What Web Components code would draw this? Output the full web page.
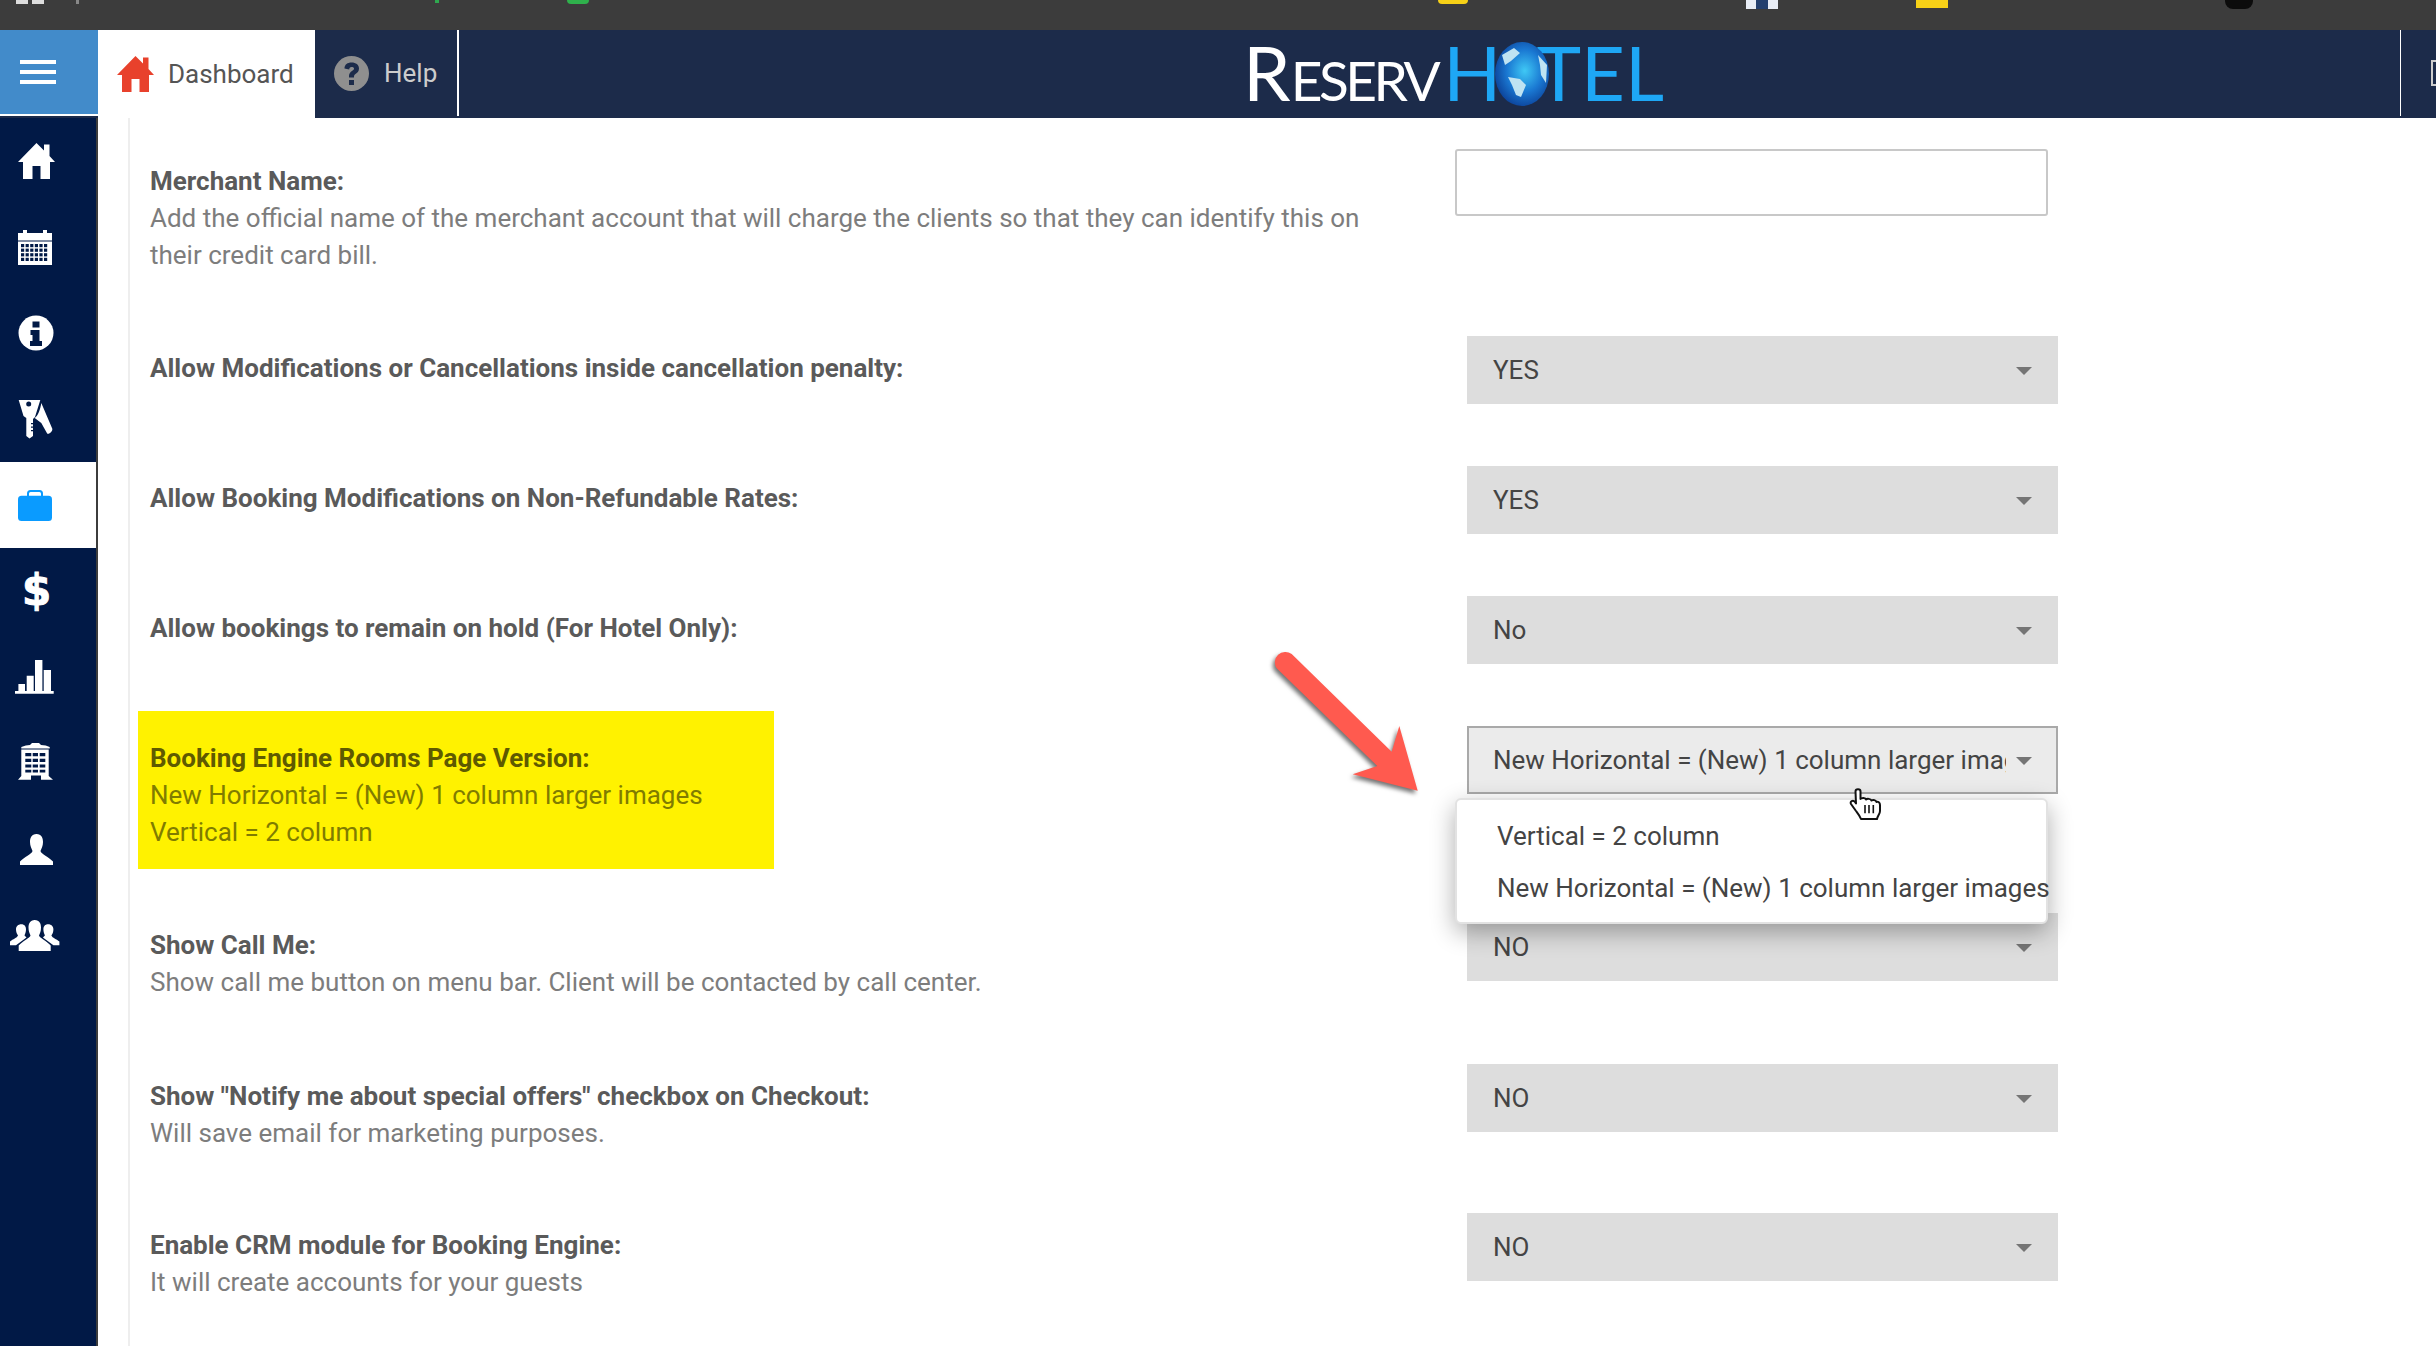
<!DOCTYPE html>
<html>
<head>
<meta charset="utf-8">
<title>ReservHotel settings</title>
<style>
  html, body { margin: 0; height: 100%; overflow: hidden; background: #fff; }
  body { font-family: Roboto, "Liberation Sans", sans-serif; display: flex; flex-direction: column; width: 2436px; height: 1346px; }
</style>
</head>
<body>
<chrome-strip></chrome-strip>
<app-header></app-header>
<main-area>
  <side-nav>
    <nav-item><svg viewBox="0 0 37 36" width="37" height="36" fill="currentColor"><path d="M18.5 0L26 7.500V1.500h5.500V13L37 19H32V36H22.500V23H14.500V36H5V19H0Z"/></svg></nav-item>
    <nav-item><cal-icon></cal-icon></nav-item>
    <nav-item><svg viewBox="0 0 36 36" width="36" height="36"><circle cx="18" cy="18" r="17.500" fill="currentColor"/><path fill="#011946" d="M14.500 6.500h7v6h-7zM12.500 15h9v11h2.500v5H12v-5h2.500v-6h-2z"/></svg></nav-item>
    <nav-item><svg viewBox="0 0 36 39" width="36" height="39"><path fill="currentColor" fill-rule="evenodd" d="M0.700 0H22.300L17 17 15 19V36L11.500 38.500 8.300 36V18L5.500 16ZM8.200 4a2.500 2.500 0 1 0 5 0 2.500 2.500 0 1 0-5 0Z"/><path fill="#011946" d="M13 23h2v1.200h-2zM13 26.500h2v1.200h-2zM13 30h2v1.200h-2z"/><path fill="currentColor" d="M23.300 3L34.300 28.700C34.800 31 31.500 34.500 29.300 33.700L23.300 23 16.700 18C20 16 22.500 9 23.300 3Z"/></svg></nav-item>
    <nav-item active><svg viewBox="0 0 34 31" width="34" height="31"><path fill="none" stroke="currentColor" stroke-width="2" d="M10 6V3.500Q10 1 12.500 1H21.500Q24 1 24 3.500V6"/><rect y="5.700" width="34" height="25.300" rx="3.500" fill="currentColor"/></svg></nav-item>
    <nav-item><span class="dollar">$</span></nav-item>
    <nav-item><svg viewBox="0 0 39 34" width="39" height="34" fill="currentColor" style="margin-left:-3px"><path d="M0 31h38.700v2.700H0zM3.400 24h6.600v7H3.400zM11.700 15.700h7V31h-7zM20 0h7.400v31H20zM28.700 10H36v21h-7.300z"/></svg></nav-item>
    <nav-item style="padding-bottom:3px"><svg viewBox="0 0 35 37" width="35" height="37"><path fill="currentColor" d="M3.300 4Q8 2 12 2L14 0H21L23 2Q28 2 31.700 4V5.500H3.300ZM3.300 6.500H30.700V33L35 36.700H23V32.500H13V36.700H0L3.300 33Z"/><path fill="#011946" d="M7.300 10h6v3.300h-6zM14.700 10H20v3.300h-5.300zM21.700 10h5.600v3.300h-5.600zM7.300 15.700h6V19h-6zM14.700 15.700H20V19h-5.300zM21.700 15.700h5.600V19h-5.600zM7.300 21.400h6v3h-6zM14.700 21.400H20v3h-5.300zM21.700 21.400h5.600v3h-5.600zM7.300 26.700h6v2.700h-6zM14.700 26.700H20v2.700h-5.300zM21.700 26.700h5.600v2.700h-5.600z"/></svg></nav-item>
    <nav-item><svg viewBox="0 0 33 31" width="33" height="31" fill="currentColor" style="margin-left:2px"><path d="M16.500 0C21.500 0 23 4 23 8C23 12 21.500 14.500 20.500 17C21 20 29 23 33 27.500V31H0V27.500C4 23 12 20 12.500 17C11.500 14.500 10 12 10 8C10 4 11.500 0 16.500 0Z"/></svg></nav-item>
    <nav-item><svg viewBox="0 0 50 31" width="50" height="31" fill="currentColor" style="margin-left:-8px"><path d="M24.700 0C29.700 0 31 4 31 7.500C31 11 30 13 29 15.500C29.500 18 37 21 40.700 25.500V31H8.700V25.500C12.500 21 20 18 20.500 15.500C19.500 13 18.500 11 18.500 7.500C18.500 4 20 0 24.700 0Z"/><path d="M11.300 4.300C14.500 4.300 16 6.500 16 9.500C16 12 15 14 14.500 15.500L16.500 17.500L6 25.300H0V21.500C3 19 7 18 8 15.500C7 14 6 12 6 9.500C6 6.500 8 4.300 11.300 4.300Z"/><path d="M38.100 4.300C34.900 4.300 33.400 6.500 33.400 9.500C33.400 12 34.400 14 34.900 15.500L32.900 17.500L43.400 25.300H49.400V21.500C46.400 19 42.400 18 41.400 15.500C42.400 14 43.400 12 43.400 9.500C43.400 6.500 41.400 4.300 38.100 4.300Z"/></svg></nav-item>
  </side-nav>
  <settings-panel>
    <setting-row style="--row-h:187px">
      <span slot="title">Merchant Name:</span>
      Add the official name of the merchant account that will charge the clients so that they can identify this on their credit card bill.
      <text-field slot="control"></text-field>
    </setting-row>
    <setting-row style="--row-h:130px">
      <span slot="title">Allow Modifications or Cancellations inside cancellation penalty:</span>
      <select-box slot="control">YES</select-box>
    </setting-row>
    <setting-row style="--row-h:130px">
      <span slot="title">Allow Booking Modifications on Non-Refundable Rates:</span>
      <select-box slot="control">YES</select-box>
    </setting-row>
    <setting-row style="--row-h:130px">
      <span slot="title">Allow bookings to remain on hold (For Hotel Only):</span>
      <select-box slot="control">No</select-box>
    </setting-row>
    <setting-row style="--row-h:187px" highlight>
      <span slot="title">Booking Engine Rooms Page Version:</span>
      New Horizontal = (New) 1 column larger images<br>Vertical = 2 column
      <select-box slot="control" hover>New Horizontal = (New) 1 column larger images
        <option-menu slot="menu">
          <div>Vertical = 2 column</div>
          <div>New Horizontal = (New) 1 column larger images</div>
        </option-menu>
      </select-box>
    </setting-row>
    <setting-row style="--row-h:151px">
      <span slot="title">Show Call Me:</span>
      Show call me button on menu bar. Client will be contacted by call center.
      <select-box slot="control">NO</select-box>
    </setting-row>
    <setting-row style="--row-h:149px">
      <span slot="title">Show "Notify me about special offers" checkbox on Checkout:</span>
      Will save email for marketing purposes.
      <select-box slot="control">NO</select-box>
    </setting-row>
    <setting-row style="--row-h:133px">
      <span slot="title">Enable CRM module for Booking Engine:</span>
      It will create accounts for your guests
      <select-box slot="control">NO</select-box>
    </setting-row>
    <callout-arrow></callout-arrow>
    <hand-cursor></hand-cursor>
  </settings-panel>
</main-area>

<script>
class ChromeStrip extends HTMLElement {
  constructor () {
    super()
    this.attachShadow({ mode: 'open' }).innerHTML = `
      <style>
        :host { display: flex; flex: none; height: 30px; background: #3c3c3c; overflow: hidden; align-items: flex-start; }
        i { display: block; flex: none; height: 4px; }
      </style>
      <i style="margin-left:16px;width:12px;background:#ddd"></i>
      <i style="margin-left:4px;width:12px;background:#ddd"></i>
      <i style="margin-left:32px;width:3px;background:#888"></i>
      <i style="margin-left:356px;width:4px;height:3px;background:#2fa84f"></i>
      <i style="margin-left:128px;width:22px;height:4px;border-radius:0 0 11px 11px;background:#2fb14c"></i>
      <i style="margin-left:849px;width:30px;height:4px;border-radius:0 0 10px 10px;background:#f7d117"></i>
      <i style="margin-left:278px;width:32px;height:9px;background:linear-gradient(90deg,#e8edf5 30%,#24406e 30%,#24406e 70%,#e8edf5 70%)"></i>
      <i style="margin-left:138px;width:32px;height:8px;background:#f7d117"></i>
      <i style="margin-left:277px;width:28px;height:9px;border-radius:0 0 8px 8px;background:#0c0c0c"></i>
    `
  }
}
customElements.define('chrome-strip', ChromeStrip)

class AppHeader extends HTMLElement {
  constructor () {
    super()
    this.attachShadow({ mode: 'open' }).innerHTML = `
      <style>
        :host { display: flex; flex: none; height: 88px; background: #1c2b4a; font-size: 26px; box-sizing: border-box; }
        .burger { width: 78px; height: 84px; background: #428bca; border-bottom: 2px solid #fff; display: flex; flex-direction: column; gap: 6px; align-items: flex-start; justify-content: center; padding-left: 20px; }
        .burger i { display: block; width: 36px; height: 4px; background: #fff; }
        .tab { display: flex; align-items: center; box-sizing: border-box; }
        .dash { width: 217px; height: 88px; background: #fff; color: #555; padding-left: 19px; gap: 14px; }
        .help { width: 144px; height: 86px; border-right: 2px solid #fff; color: #ccc; padding-left: 19px; gap: 15px; }
        .logo { margin-left: 784px; margin-top: 9px; display: flex; align-items: baseline; height: 65px; line-height: 65px; font-family: Lato, sans-serif; color: #fff; white-space: nowrap; }
        .logo .big { font-size: 76px; }
        .logo .small { font-size: 55px; letter-spacing: -3.500px; }
        .logo .blue { color: #1ea7f5; }
        .logo .tel { letter-spacing: 0; }
        .logo svg { align-self: flex-start; margin: 2px -14px 0 -7px; position: relative; }
        .side { margin-left: auto; width: 35px; height: 86px; border-left: 1px solid #fff; position: relative; overflow: hidden; }
        .side i { position: absolute; left: 30px; top: 30px; width: 10px; height: 26px; border: 2px solid #ccc; box-sizing: border-box; }
      </style>
      <div class="burger"><i></i><i></i><i></i></div>
      <div class="tab dash">
        <svg viewBox="0 0 37 36" width="37" height="36" fill="#e8412c"><path d="M18.500 0L26 7.500V1.500h5.500V13L37 19H32V36H22.500V23H14.500V36H5V19H0Z"/></svg>
        <span>Dashboard</span>
      </div>
      <div class="tab help">
        <svg viewBox="0 0 35 35" width="35" height="35"><circle cx="17.500" cy="17.500" r="17.500" fill="#8f8f8f"/><path fill="#1c2b4a" d="M10.500 12.500C10.500 8.500 13.500 6.500 17.500 6.500C22 6.500 25 8.800 25 12.500C25 15.500 23.200 16.800 21.500 18C20 19 20 20 20 21.500H15V20C15 17.500 16.500 16 18 15C19.500 14 20 13.500 20 12.500C20 11.500 19 11 17.500 11C16 11 15.300 12 15.200 13.500ZM15 24H20V29H15Z"/></svg>
        <span>Help</span>
      </div>
      <div class="logo" aria-label="ReservHotel">
        <span class="big">R</span><span class="small">ESERV</span><span class="big blue" style="margin-left:6px">H</span>
        <svg viewBox="0 0 56 66" width="56" height="66">
          <defs><radialGradient id="g" cx="55%" cy="45%" r="60%"><stop offset="0" stop-color="#3fc8f5"/><stop offset=".55" stop-color="#1a78d2"/><stop offset="1" stop-color="#0b3f96"/></radialGradient></defs>
          <ellipse cx="28" cy="33" rx="27" ry="32" fill="url(#g)"/>
          <path fill="#bfe3f2" d="M8 14L20 7 26 12 17 20 11 24ZM14 36L26 38 32 44 27 56 22 54 18 44ZM44 14L53 24 52 42 47 34 46 24Z"/>
        </svg>
        <span class="big blue tel">TEL</span>
      </div>
      <div class="side"><i></i></div>
    `
  }
}
customElements.define('app-header', AppHeader)

class MainArea extends HTMLElement {
  constructor () {
    super()
    this.attachShadow({ mode: 'open' }).innerHTML = `
      <style>:host { display: flex; flex: 1; min-height: 0; }</style>
      <slot></slot>
    `
  }
}
customElements.define('main-area', MainArea)

class SideNav extends HTMLElement {
  constructor () {
    super()
    this.attachShadow({ mode: 'open' }).innerHTML = `
      <style>
        :host { display: block; flex: none; width: 98px; background: #011946; border-right: 2px solid #3c3c3c; box-sizing: border-box; }
      </style>
      <slot></slot>
    `
  }
}
customElements.define('side-nav', SideNav)

class NavItem extends HTMLElement {
  constructor () {
    super()
    this.attachShadow({ mode: 'open' }).innerHTML = `
      <style>
        :host { display: flex; height: 86px; width: 96px; color: #fff; align-items: center; padding-left: 18px; box-sizing: border-box; }
        :host([active]) { background: #fff; color: #0a9bff; }
        ::slotted(.dollar) { margin-left: 4px; font: 700 42px/1 "DejaVu Sans", sans-serif; -webkit-text-stroke: 1px #fff; }
      </style>
      <slot></slot>
    `
  }
}
customElements.define('nav-item', NavItem)

class CalIcon extends HTMLElement {
  constructor () {
    super()
    var cells = ''
    for (var r = 0; r < 4; r++) {
      for (var c = 0; c < 6; c++) {
        cells += '<rect x="' + (3 + c * 4.6) + '" y="' + (14 + r * 4.6) + '" width="3.200" height="3.200"/>'
      }
    }
    this.attachShadow({ mode: 'open' }).innerHTML = `
      <style>:host { display: block; width: 34px; height: 35px; }</style>
      <svg viewBox="0 0 34 35" width="34" height="35">
        <path fill="currentColor" d="M0 3H5V0H9V3H25V0H29V3H34V35H0Z"/>
        <rect x="0" y="10.500" width="34" height="1" fill="#011946"/>
        <g fill="#011946">${cells}</g>
      </svg>
    `
  }
}
customElements.define('cal-icon', CalIcon)

class SettingsPanel extends HTMLElement {
  constructor () {
    super()
    this.attachShadow({ mode: 'open' }).innerHTML = `
      <style>
        :host { display: block; flex: 1; position: relative; overflow: hidden; padding-left: 30px; box-sizing: border-box; }
        .rule { padding: 31px 0 0 20px; border-left: 2px solid #eee; height: 100%; box-sizing: border-box; }
      </style>
      <div class="rule"><slot></slot></div>
    `
  }
}
customElements.define('settings-panel', SettingsPanel)

class SettingRow extends HTMLElement {
  constructor () {
    super()
    this.attachShadow({ mode: 'open' }).innerHTML = `
      <style>
        :host { display: grid; grid-template-columns: 1317px 593px; height: var(--row-h); font-size: 26px; line-height: 37px; color: #7d7d7d; }
        .label { padding: 14px 95px 0 0; }
        .title { display: block; font-weight: 700; color: #5a5a5a; }
        :host([highlight]) .label { background: #fff200; color: #807c00; margin: -15px 0 0 -12px; padding: 29px 0 0 12px; width: 624px; height: 129px; }
        :host([highlight]) .title { color: #5f5a00; }
        .control { position: relative; }
      </style>
      <div class="label"><span class="title"><slot name="title"></slot></span><slot></slot></div>
      <div class="control"><slot name="control"></slot></div>
    `
  }
}
customElements.define('setting-row', SettingRow)

class TextField extends HTMLElement {
  constructor () {
    super()
    this.attachShadow({ mode: 'open' }).innerHTML = `
      <style>
        :host { display: block; margin-left: -12px; width: 593px; height: 67px; }
        input { display: block; width: 100%; height: 100%; box-sizing: border-box; border: 2px solid #c8c8c8; border-radius: 3px; background: #fff; outline: none; }
      </style>
      <input type="text">
    `
  }
}
customElements.define('text-field', TextField)

class SelectBox extends HTMLElement {
  constructor () {
    super()
    this.attachShadow({ mode: 'open' }).innerHTML = `
      <style>
        :host { display: block; position: relative; width: 591px; height: 68px; background: #ddd; color: #444; box-sizing: border-box; line-height: 68px; padding: 0 52px 0 26px; font-size: 26px; }
        :host([hover]) { background: #ebebeb; border: 2px solid #a9a9a9; line-height: 64px; padding: 0 50px 0 24px; }
        .value { display: block; overflow: hidden; white-space: nowrap; }
        .caret { position: absolute; right: 26px; top: 31px; width: 0; height: 0; border: 8px solid transparent; border-top: 8px solid #757575; border-bottom: 0; }
        :host([hover]) .caret { right: 24px; top: 29px; }
      </style>
      <span class="value"><slot></slot></span>
      <i class="caret"></i>
      <slot name="menu"></slot>
    `
  }
}
customElements.define('select-box', SelectBox)

class OptionMenu extends HTMLElement {
  constructor () {
    super()
    this.attachShadow({ mode: 'open' }).innerHTML = `
      <style>
        :host { display: block; position: absolute; z-index: 5; left: -14px; top: 70px; width: 593px; height: 126px; box-sizing: border-box; background: #fff; border: 2px solid #e2e2e2; border-radius: 6px; box-shadow: 0 8px 24px rgba(0,0,0,.32); padding: 10px 0 0 40px; color: #444; line-height: 52px; white-space: nowrap; }
      </style>
      <slot></slot>
    `
  }
}
customElements.define('option-menu', OptionMenu)

class CalloutArrow extends HTMLElement {
  constructor () {
    super()
    this.attachShadow({ mode: 'open' }).innerHTML = `
      <style>
        :host { display: block; position: absolute; z-index: 6; left: 1162px; top: 522px; width: 180px; height: 180px; }
        svg { filter: drop-shadow(-2px 3px 2px rgba(0,0,0,.55)); overflow: visible; }
      </style>
      <svg viewBox="0 0 180 180" width="180" height="180">
        <path fill="#ff5a4f" d="M31.700 14L131.700 111.700 139.300 86 157.700 150.700 92.700 134.300 117.300 126 16.700 28.300A10.500 10.500 0 0 1 31.700 14Z"/>
      </svg>
    `
  }
}
customElements.define('callout-arrow', CalloutArrow)

class HandCursor extends HTMLElement {
  constructor () {
    super()
    this.attachShadow({ mode: 'open' }).innerHTML = `
      <style>
        :host { display: block; position: absolute; z-index: 7; left: 1752px; top: 669px; width: 32px; height: 35px; }
        svg { overflow: visible; }
      </style>
      <svg viewBox="0 0 32 35" width="32" height="35">
        <path fill="#fff" stroke="#111" stroke-width="2" stroke-linejoin="round" d="M5.500 4.500C5.500 1.500 10.500 1.500 10.500 4.500V12C11.500 10.500 15.500 10.500 16 12.500C17 11.500 20.500 11.500 21.500 13.500C23 12.500 26 13 26.500 15C28 14 30 15.500 30 18V24C30 27 27.500 29 27 32H11C10 29 7.500 26 6 24L1 17C-0.500 14.500 3 12.500 5 15L6 16.500Z"/>
        <path stroke="#111" stroke-width="1.600" d="M15 18V26.300M19 18V26.300M23.300 18V26.300"/>
      </svg>
    `
  }
}
customElements.define('hand-cursor', HandCursor)
</script>
</body>
</html>
